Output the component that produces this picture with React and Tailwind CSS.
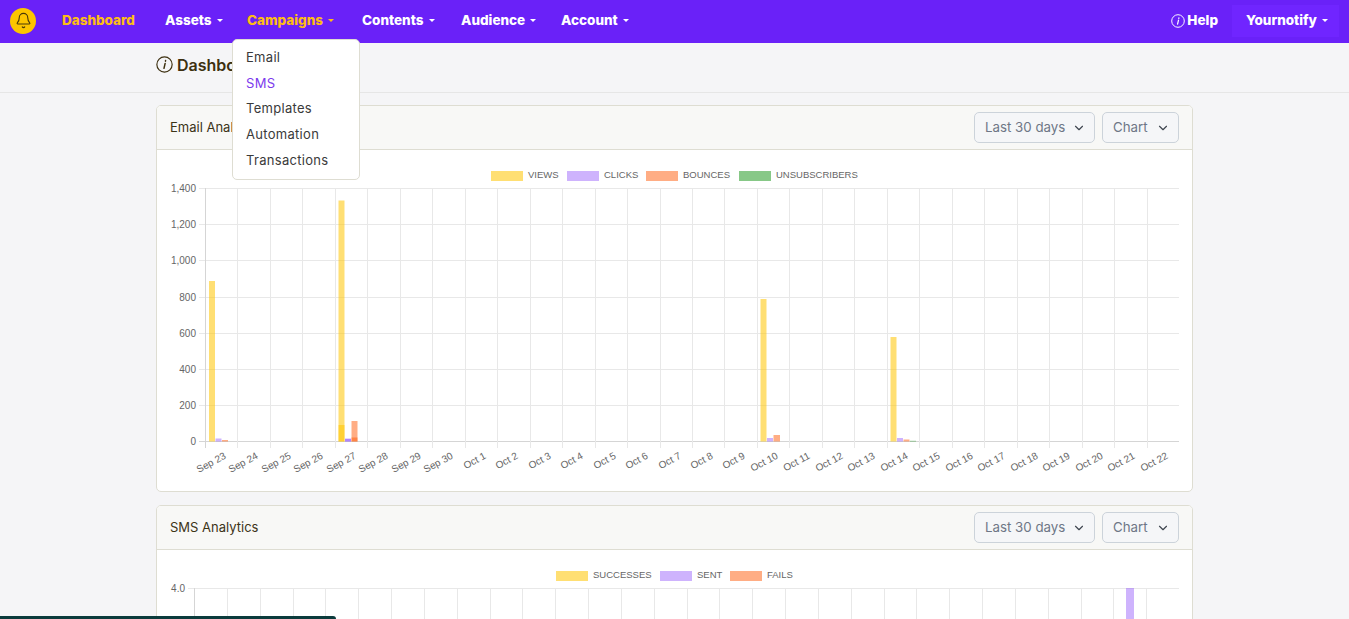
import React from 'react';
import { Bell, ChevronDown } from 'lucide-react';

const YELLOW = 'rgba(255,197,0,0.55)';
const PURPLE = 'rgba(132,66,250,0.4)';
const ORANGE = 'rgba(255,92,10,0.5)';
const GREEN = 'rgba(24,150,24,0.52)';

const days = [
  'Sep 23', 'Sep 24', 'Sep 25', 'Sep 26', 'Sep 27', 'Sep 28', 'Sep 29', 'Sep 30',
  'Oct 1', 'Oct 2', 'Oct 3', 'Oct 4', 'Oct 5', 'Oct 6', 'Oct 7', 'Oct 8', 'Oct 9', 'Oct 10',
  'Oct 11', 'Oct 12', 'Oct 13', 'Oct 14', 'Oct 15', 'Oct 16', 'Oct 17', 'Oct 18', 'Oct 19',
  'Oct 20', 'Oct 21', 'Oct 22',
];

// [x, top y, width, colour], in page pixels
const emailBars = [
  [209, 281, 6, YELLOW], [215.5, 438.5, 6, PURPLE], [222, 440, 6, ORANGE],
  [338.5, 200.5, 6, YELLOW], [338.5, 425, 6, YELLOW], [345, 438.5, 6, PURPLE], [345, 439, 6, PURPLE],
  [351.5, 421, 6, ORANGE], [351.5, 437.5, 6, ORANGE],
  [760.5, 299, 6, YELLOW], [767, 438, 6, PURPLE], [773.5, 435, 6.5, ORANGE],
  [890.5, 337, 6, YELLOW], [897, 438, 6, PURPLE], [903.5, 439.5, 6, ORANGE], [910, 440.8, 6, GREEN],
];

const smsBars = [[1126, 588, 8, PURPLE]];

const emailLegend = [
  { x: 491, label: 'VIEWS', color: YELLOW },
  { x: 567, label: 'CLICKS', color: PURPLE },
  { x: 646, label: 'BOUNCES', color: ORANGE },
  { x: 739, label: 'UNSUBSCRIBERS', color: GREEN },
];

const smsLegend = [
  { x: 556, label: 'SUCCESSES', color: YELLOW },
  { x: 660, label: 'SENT', color: PURPLE },
  { x: 730, label: 'FAILS', color: ORANGE },
];

const Chart = ({ top, left, ticks, bars, legend }) => {
  const right = 1179;
  const yTop = top + 38;
  const yBottom = yTop + 253;
  const step = (right - left) / 30;
  const rowH = 253 / (ticks.length - 1);

  return (
    <svg width="1035" height="341" viewBox={`157 ${top} 1035 341`} className="block font-['Liberation_Sans',Arial,sans-serif]">
      {legend.map((item) => (
        <g key={item.label}>
          <rect x={item.x} y={top + 21} width="32" height="10" fill={item.color} />
          <text x={item.x + 37} y={top + 27.5} fontSize="9.5" fill="#666">{item.label}</text>
        </g>
      ))}
      {ticks.map((tick, i) => {
        const y = Math.round(yTop + i * rowH + 0.2) + 0.5;
        return (
          <g key={tick}>
            <line x1={left - 6} x2={right} y1={y} y2={y} stroke={i === ticks.length - 1 ? '#d5d5d5' : '#e8e8e8'} />
            <text x={left - 9} y={y + 3} fontSize="10" fill="#666" textAnchor="end">{tick}</text>
          </g>
        );
      })}
      {days.map((day, i) => {
        const x = Math.round(left + i * step) + 0.5;
        return (
          <g key={day}>
            <line x1={x} x2={x} y1={yTop} y2={yBottom + 7} stroke={i === 0 ? '#d5d5d5' : '#e8e8e8'} />
            <text transform={`translate(${x + step / 2 + 5} ${yBottom + 17}) rotate(-28)`} fontSize="10" fill="#666" textAnchor="end">{day}</text>
          </g>
        );
      })}
      {bars.map(([x, y, w, color], i) => (
        <rect key={i} x={x} y={y} width={w} height={Math.max(yBottom + 0.5 - y, 0)} fill={color} />
      ))}
    </svg>
  );
};

const InfoIcon = ({ className }) => (
  <svg viewBox="0 0 16 16" fill="none" stroke="currentColor" className={className}>
    <circle cx="8" cy="8" r="7.2" strokeWidth="1.1" />
    <path d="M8.6 7 7.5 11.6M9 4.3l-.1.6" strokeWidth="1.4" strokeLinecap="round" />
  </svg>
);

const Caret = () => <span className="ml-[5px] inline-block border-x-[3.5px] border-t-[3.5px] border-x-transparent border-t-current align-middle" />;

const NavLink = ({ label, active, caret, className }) => (
  <a className={`flex items-center text-[13.5px] font-extrabold ${active ? 'text-[#fdbd14]' : 'text-white'} ${className}`}>
    {label}
    {caret && <Caret />}
  </a>
);

const Select = ({ label, className }) => (
  <div className={`flex h-[31px] items-center justify-between rounded-[5px] border border-[#ccd3da] bg-[#f5f6f8] pl-[10px] pr-[8px] text-[13.3px] text-[#6e7686] ${className}`}>
    {label}
    <ChevronDown size={14} strokeWidth={2} className="text-[#3f4650]" />
  </div>
);

const Card = ({ title, children, className }) => (
  <section className={`overflow-hidden rounded-[5px] border border-[#deddd2] bg-white ${className}`}>
    <header className="flex h-[44px] items-center justify-between border-b border-[#deddd2] bg-[#f8f8f6] pl-[13px] pr-[13px]">
      <h2 className="text-[13px] text-[#3c3418]">{title}</h2>
      <div className="flex gap-[7px]">
        <Select label="Last 30 days" className="w-[121px]" />
        <Select label="Chart" className="w-[77px]" />
      </div>
    </header>
    {children}
  </section>
);

const App = () => {
  return (
    <div className="relative h-screen overflow-hidden bg-[#f5f5f7] font-['Inter','Noto_Sans',sans-serif]">
      {/* Top nav */}
      <nav className="flex h-[43px] items-center bg-[#6a21f8] pb-[2px] pl-[10px] pr-[10px]">
        <div className="flex h-[26px] w-[26px] items-center justify-center rounded-full bg-[#fdc500]">
          <Bell size={17} strokeWidth={1.6} className="text-[#4a3a08]" />
        </div>
        <NavLink label="Dashboard" active className="ml-[26px] w-[103px]" />
        <NavLink label="Assets" caret className="w-[82px]" />
        <NavLink label="Campaigns" active caret className="w-[115px]" />
        <NavLink label="Contents" caret className="w-[99px]" />
        <NavLink label="Audience" caret className="w-[100px]" />
        <NavLink label="Account" caret />
        <div className="ml-auto flex items-center gap-[2px] text-[13.5px] font-extrabold text-white">
          <InfoIcon className="h-[14px] w-[14px]" />
          Help
        </div>
        <div className="ml-[14px] flex h-[32px] w-[107px] items-center bg-[#7025ff] pl-[14px] text-[13.5px] font-extrabold text-white">
          Yournotify
          <Caret />
        </div>
      </nav>

      {/* Page heading */}
      <div className="h-[50px] border-b border-[#e6e6e6] pl-[156px]">
        <div className="flex h-[43px] items-center gap-[4px] text-[16px] font-semibold text-[#3d3010]">
          <InfoIcon className="h-[17px] w-[17px]" />
          Dashboard
        </div>
      </div>

      {/* Cards */}
      <main className="ml-[156px] mt-[12px] flex w-[1037px] flex-col gap-[13px]">
        <Card title="Email Analytics">
          <Chart
            top={150}
            left={205}
            ticks={['1,400', '1,200', '1,000', '800', '600', '400', '200', '0']}
            bars={emailBars}
            legend={emailLegend}
          />
        </Card>
        <Card title="SMS Analytics">
          <Chart
            top={550}
            left={194}
            ticks={['4.0', '3.5', '3.0', '2.5', '2.0', '1.5', '1.0', '0.5', '0']}
            bars={smsBars}
            legend={smsLegend}
          />
        </Card>
      </main>

      {/* Campaigns dropdown */}
      <div className="absolute left-[232px] top-[39px] flex h-[141px] w-[128px] flex-col rounded-[5px] border border-[#deddd2] bg-white pl-[13px] pt-[5px] text-[13px] tracking-[0.3px] text-[#3a3a3a]">
        <a className="flex h-[25.7px] items-center">Email</a>
        <a className="flex h-[25.7px] items-center text-[#7c3aed]">SMS</a>
        <a className="flex h-[25.7px] items-center">Templates</a>
        <a className="flex h-[25.7px] items-center">Automation</a>
        <a className="flex h-[25.7px] items-center">Transactions</a>
      </div>

      {/* Strip of a fixed bar cut off by the window */}
      <div className="absolute bottom-0 left-0 h-[3px] w-[336px] rounded-tr-[3px] bg-[#0b3b3c]" />
    </div>
  );
};

export default App;
